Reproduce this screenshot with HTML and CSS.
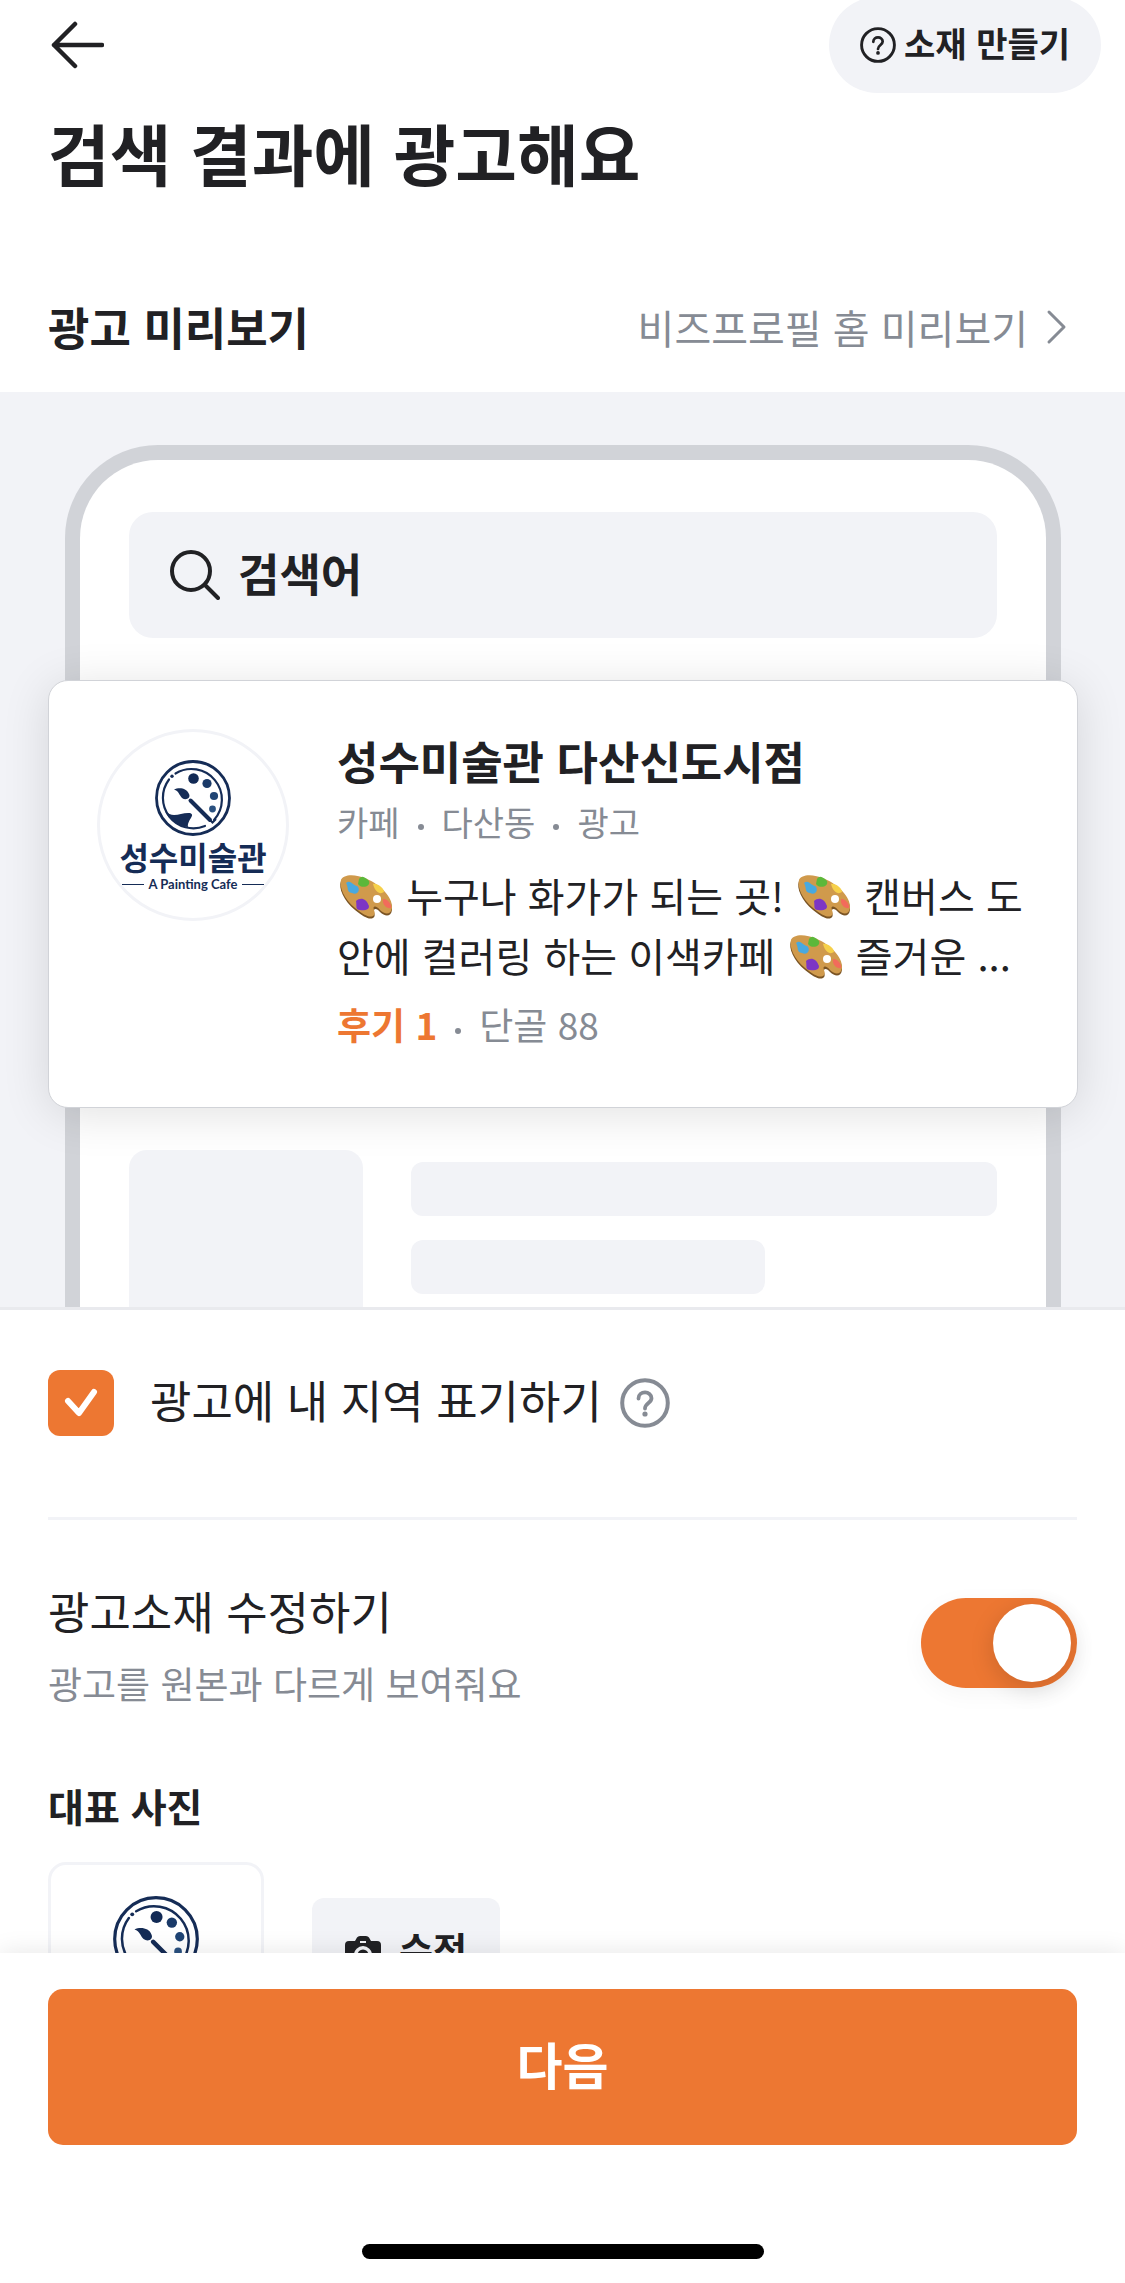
FILE: index.html
```
<!DOCTYPE html>
<html lang="ko">
<head>
    <meta charset="UTF-8">
    <meta name="viewport" content="width=device-width, initial-scale=1.0">
    <title>검색 결과에 광고해요</title>
    <link rel="stylesheet" href="styles.css">
</head>
<body>

<!-- shared symbols -->
<svg class="symbols" aria-hidden="true">
    <symbol id="logo" viewBox="0 0 76 76">
        <circle cx="38" cy="38" r="36.5" fill="none" stroke="#152c56" stroke-width="2.8"/>
        <path d="M20.5 13.5A30.5 30.5 0 0 1 59 60" fill="none" stroke="#152c56" stroke-width="2.2" stroke-linecap="round"/>
        <path d="M14 19.5A30.5 30.5 0 0 0 50 66" fill="none" stroke="#152c56" stroke-width="2.2" stroke-linecap="round"/>
        <circle cx="17" cy="16.2" r="1.7" fill="#152c56"/>
        <circle cx="38.5" cy="18.5" r="5.3" fill="#122a55"/>
        <circle cx="52" cy="23.5" r="4.6" fill="#1a3a68"/>
        <circle cx="59" cy="36" r="4.1" fill="#1f4474"/>
        <circle cx="57.5" cy="49" r="3.4" fill="#2a5180"/>
        <path d="M19 29.500C24 27 32 28 34 34C36 38 31 41 27 38C24 35 24 31 19 29.500Z" fill="#152c56"/>
        <path d="M35.500 40.500L55 60" stroke="#152c56" stroke-width="4" stroke-linecap="round"/>
        <path d="M53 58L57.500 62.500L61 59" fill="none" stroke="#152c56" stroke-width="2"/>
        <path d="M10 51C18 59 26 52 35 53C41 55 32 60 33 67C23 66 14 60 10 51Z" fill="#152c56"/>
    </symbol>
    <symbol id="help" viewBox="0 0 50 50">
        <circle cx="25" cy="25" r="22.8" fill="none" stroke="currentColor" stroke-width="4"/>
        <path d="M18.500 20.500C18.500 12.500 31.500 12.500 31.500 20.300C31.500 25 25 25 25 30.500" fill="none" stroke="currentColor" stroke-width="3.8" stroke-linecap="round"/>
        <circle cx="25" cy="36" r="2.6" fill="currentColor"/>
    </symbol>
    <symbol id="palette" viewBox="0 0 56 46">
        <path d="M35 44C31 46 26 43 17 36C6 27 0 14 3 7C6 1 17 1 29 6C43 12 55 25 54 36C53 43 47 43 42 38C39 34 35 34 36 38C37 41 37 43 35 44Z" fill="#7a5424"/>
        <path d="M35 42C31 44 26 41 17 34C6 25 1 13 3 6C6 0 17 0 29 5C43 11 55 24 54 34C53 41 47 41 42 36C39 32 34 31 36 36C37 39 37 41 35 42Z" fill="#d09a4c"/>
        <circle cx="39" cy="25" r="4" fill="#fff"/>
        <path d="M21 5C24 0 28 4 31 7C33 13 23 15 20 10Z" fill="#5cb83a"/>
        <path d="M8 9C12 5 15 11 19 12C23 15 20 22 14 19C8 18 11 14 8 9Z" fill="#48a9df"/>
        <path d="M35 10C39 9 46 14 46 18C42 21 37 18 35 10Z" fill="#f6d04a"/>
        <path d="M18 27C23 22 29 26 30 30C34 36 25 37 22 36C17 36 19 32 18 27Z" fill="#7d36c4"/>
        <path d="M45 25C49 24 54 30 53 34C49 35 44 31 45 25Z" fill="#f26b5b"/>
    </symbol>
</svg>

<div class="app">
    <div class="content">
        <header class="topbar">
            <button class="back-btn" type="button" aria-label="뒤로">
                <svg viewBox="0 0 56 50"><path d="M27 4L6 25L27 46M6 25H54" fill="none" stroke="currentColor" stroke-width="4.5" stroke-linecap="round" stroke-linejoin="round"/></svg>
            </button>
            <button class="guide-btn" type="button">
                <svg><use href="#help"/></svg>
                <span>소재 만들기</span>
            </button>
        </header>

        <h1>검색 결과에 광고해요</h1>

        <div class="section-head">
            <h2>광고 미리보기</h2>
            <a href="#">
                비즈프로필 홈 미리보기
                <svg viewBox="0 0 22 36"><path d="M3 3L18 18L3 33" fill="none" stroke="currentColor" stroke-width="3" stroke-linecap="round" stroke-linejoin="round"/></svg>
            </a>
        </div>

        <section class="preview">
            <div class="phone">
                <div class="search-box">
                    <svg viewBox="0 0 50 50"><circle cx="21" cy="21" r="19" fill="none" stroke="currentColor" stroke-width="4"/><path d="M35 35L48 48" stroke="currentColor" stroke-width="4" stroke-linecap="round"/></svg>
                    <span>검색어</span>
                </div>

                <article class="ad-card">
                    <div class="avatar">
                        <svg><use href="#logo"/></svg>
                        <div class="brand">성수미술관</div>
                        <div class="tagline">A Painting Cafe</div>
                    </div>
                    <div class="ad-text">
                        <h3>성수미술관 다산신도시점</h3>
                        <p class="meta">카페<i></i>다산동<i></i>광고</p>
                        <p class="desc">
                            <svg><use href="#palette"/></svg> 누구나 화가가 되는 곳! <svg><use href="#palette"/></svg> 캔버스 도<br>안에 컬러링 하는 이색카페 <svg><use href="#palette"/></svg> 즐거운 ...
                        </p>
                        <p class="stats"><b>후기 1</b><i></i>단골 88</p>
                    </div>
                </article>

                <div class="skeleton">
                    <div class="skeleton-img"></div>
                    <div class="skeleton-lines">
                        <div></div>
                        <div class="short"></div>
                    </div>
                </div>
            </div>
        </section>

        <div class="region-row">
            <input type="checkbox" id="region" checked>
            <label for="region">광고에 내 지역 표기하기</label>
            <button type="button" class="help-btn" aria-label="도움말"><svg><use href="#help"/></svg></button>
        </div>

        <section class="edit">
            <div class="edit-head">
                <label for="editAd">
                    <span>광고소재 수정하기</span>
                    <small>광고를 원본과 다르게 보여줘요</small>
                </label>
                <input type="checkbox" role="switch" id="editAd" class="switch" checked>
            </div>

            <h4>대표 사진</h4>
            <div class="photo-row">
                <div class="thumb"><svg><use href="#logo"/></svg></div>
                <button type="button" class="edit-btn">
                    <svg viewBox="0 0 36 32"><path fill-rule="evenodd" d="M10 5L12 1.500Q13 0 15 0H21Q23 0 24 1.500L26 5H32Q36 5 36 9V28Q36 32 32 32H4Q0 32 0 28V9Q0 5 4 5ZM18 10A9 9 0 1 0 18 28A9 9 0 1 0 18 10ZM15 5V7H21V5Z" fill="currentColor"/><circle cx="18" cy="19" r="5.500" fill="currentColor"/></svg>
                    <span>수정</span>
                </button>
            </div>
        </section>
    </div>

    <footer class="bottom">
        <button type="button" class="next-btn">다음</button>
        <div class="home-bar"></div>
    </footer>
</div>

</body>
</html>
```
FILE: styles.css
```
* {
    box-sizing: border-box;
    margin: 0;
    padding: 0;
}

body {
    font-family: "Noto Sans CJK KR", sans-serif;
    background-color: #fff;
    color: #212124;
}

button {
    font-family: inherit;
    color: inherit;
    border: none;
    background: none;
    cursor: pointer;
}

svg {
    flex: none;
    display: block;
}

.symbols {
    display: none;
}

.app {
    display: flex;
    flex-direction: column;
    height: 100vh;
}

.content {
    flex: 1;
    min-height: 0;
    overflow-y: auto;
    scrollbar-width: none;
}

/* header */
.topbar {
    display: flex;
    justify-content: space-between;
    align-items: flex-start;
    height: 93px;
    padding: 0 24px 0 48px;
}

.back-btn {
    padding-top: 20px;
}

.back-btn svg {
    width: 56px;
    height: 50px;
}

.guide-btn {
    display: flex;
    align-items: center;
    gap: 8px;
    height: 96px;
    margin-top: -3px;
    padding: 0 31px;
    border-radius: 48px;
    background-color: #f2f3f7;
    font-size: 34px;
    font-weight: 700;
}

.guide-btn svg {
    width: 36px;
    height: 36px;
}

.guide-btn span,
.search-box span,
.edit-btn span {
    padding-bottom: 6px;
}

h1 {
    padding: 9px 48px 0;
    font-size: 67px;
    line-height: 100px;
    font-weight: 700;
}

.section-head {
    display: flex;
    justify-content: space-between;
    align-items: center;
    padding: 94px 57px 34px 48px;
}

.section-head h2 {
    font-size: 45px;
    line-height: 62px;
    font-weight: 700;
}

.section-head a {
    display: flex;
    align-items: center;
    gap: 18px;
    color: #868b94;
    font-size: 40px;
    line-height: 60px;
    text-decoration: none;
}

.section-head a svg {
    width: 22px;
    height: 36px;
}

/* ad preview */
.preview {
    padding: 53px 64px 0 65px;
    overflow: hidden;
    border-bottom: 3px solid #e9eaee;
    background-color: #f2f3f7;
}

.phone {
    border: 15px solid #d1d3d8;
    border-bottom: none;
    border-radius: 93px 93px 0 0;
    background-color: #fff;
    padding-top: 52px;
}

.search-box {
    display: flex;
    align-items: center;
    gap: 18px;
    height: 126px;
    margin: 0 49px 42px;
    padding: 0 41px;
    border-radius: 24px;
    background-color: #f2f3f7;
    font-size: 45px;
    font-weight: 700;
}

.search-box svg {
    width: 50px;
    height: 50px;
}

.ad-card {
    display: flex;
    gap: 48px;
    height: 428px;
    margin: 0 -32px;
    padding: 48px;
    border: 1px solid #d1d3d8;
    border-radius: 20px;
    background-color: #fff;
    box-shadow: 0 6px 48px rgba(0, 0, 0, 0.12);
}

.avatar {
    flex: none;
    display: flex;
    flex-direction: column;
    align-items: center;
    width: 192px;
    height: 192px;
    padding-top: 28px;
    border: 3px solid #f2f3f7;
    border-radius: 50%;
    color: #152c56;
    white-space: nowrap;
}

.avatar svg {
    width: 76px;
    height: 76px;
}

.brand {
    margin-top: 2px;
    font-size: 32px;
    line-height: 36px;
    font-weight: 700;
}

.tagline {
    display: flex;
    align-items: center;
    gap: 5px;
    margin-top: 2px;
    font-family: Lato, sans-serif;
    font-size: 13px;
    line-height: 16px;
    font-weight: 700;
}

.tagline::before,
.tagline::after {
    content: "";
    width: 22px;
    height: 1px;
    background-color: #152c56;
}

.ad-text {
    flex: 1;
    min-width: 0;
    white-space: nowrap;
}

.ad-text h3 {
    margin-top: 1px;
    font-size: 45px;
    line-height: 62px;
    font-weight: 700;
}

.ad-text i {
    display: inline-block;
    width: 6px;
    height: 6px;
    margin: 0 18px;
    border-radius: 50%;
    background-color: #868b94;
    vertical-align: 6px;
}

.meta {
    color: #868b94;
    font-size: 34px;
    line-height: 60px;
}

.desc {
    margin-top: 13px;
    font-size: 40px;
    line-height: 60px;
}

.desc svg {
    display: inline-block;
    width: 56px;
    height: 46px;
    margin: 0 1px;
    vertical-align: -8px;
}

.stats {
    margin-top: 9px;
    color: #868b94;
    font-size: 37px;
    line-height: 60px;
}

.stats b {
    color: #ed7732;
}

.skeleton {
    display: flex;
    gap: 48px;
    margin: 42px 49px 0;
}

.skeleton-img {
    width: 234px;
    height: 157px;
    border-radius: 18px 18px 0 0;
    background-color: #f2f3f7;
}

.skeleton-lines {
    flex: 1;
    display: flex;
    flex-direction: column;
    gap: 24px;
    padding-top: 12px;
}

.skeleton-lines div {
    height: 54px;
    border-radius: 12px;
    background-color: #f2f3f7;
}

.skeleton-lines .short {
    width: 354px;
}

/* settings */
.region-row {
    display: flex;
    align-items: center;
    margin: 0 48px;
    padding: 60px 0 81px;
    border-bottom: 3px solid #f2f3f7;
}

.region-row input {
    appearance: none;
    width: 66px;
    height: 66px;
    border-radius: 12px;
    background: #ed7732 url("data:image/svg+xml,%3Csvg xmlns='http://www.w3.org/2000/svg' viewBox='0 0 66 66'%3E%3Cpath d='M20 31L31 43L46 22' fill='none' stroke='white' stroke-width='6' stroke-linecap='round' stroke-linejoin='round'/%3E%3C/svg%3E");
}

.region-row label {
    margin: 0 18px 0 36px;
    padding-bottom: 6px;
    font-size: 45px;
    line-height: 60px;
}

.help-btn {
    color: #868b94;
}

.help-btn svg {
    width: 50px;
    height: 50px;
}

.edit {
    padding: 58px 48px 0;
}

.edit-head {
    display: flex;
    justify-content: space-between;
    align-items: flex-start;
}

.edit-head span {
    display: block;
    font-size: 45px;
    line-height: 66px;
}

.edit-head small {
    display: block;
    margin-top: 9px;
    color: #868b94;
    font-size: 37px;
    line-height: 60px;
}

.switch {
    appearance: none;
    display: flex;
    justify-content: flex-end;
    width: 156px;
    height: 90px;
    margin-top: 20px;
    padding: 6px;
    border-radius: 45px;
    background-color: #ed7732;
    box-shadow: 0 6px 24px rgba(0, 0, 0, 0.04);
}

.switch::before {
    content: "";
    width: 78px;
    height: 78px;
    border-radius: 50%;
    background-color: #fff;
    box-shadow: 0 6px 24px rgba(0, 0, 0, 0.15);
}

.edit h4 {
    margin: 62px 0 27px;
    font-size: 39px;
    line-height: 60px;
    font-weight: 700;
}

.photo-row {
    display: flex;
    align-items: flex-start;
    gap: 48px;
}

.thumb {
    width: 216px;
    height: 216px;
    padding-top: 31px;
    border: 3px solid #f2f3f7;
    border-radius: 18px;
}

.thumb svg {
    width: 86px;
    height: 86px;
    margin: 0 auto;
}

.edit-btn {
    display: flex;
    align-items: center;
    gap: 18px;
    height: 108px;
    margin-top: 36px;
    padding: 0 33px;
    border-radius: 12px;
    background-color: #f2f3f7;
    font-size: 37px;
    font-weight: 700;
}

.edit-btn svg {
    width: 36px;
    height: 32px;
}

/* bottom */
.bottom {
    position: relative;
    padding: 36px 48px 24px;
    background-color: #fff;
    box-shadow: 0 0 24px rgba(0, 0, 0, 0.1);
}

.next-btn {
    display: block;
    width: 100%;
    height: 156px;
    padding-bottom: 8px;
    border-radius: 15px;
    background-color: #ed7732;
    color: #fff;
    font-size: 50px;
    font-weight: 700;
}

.home-bar {
    width: 402px;
    height: 15px;
    margin: 99px auto 0;
    border-radius: 8px;
    background-color: #000;
}
```
